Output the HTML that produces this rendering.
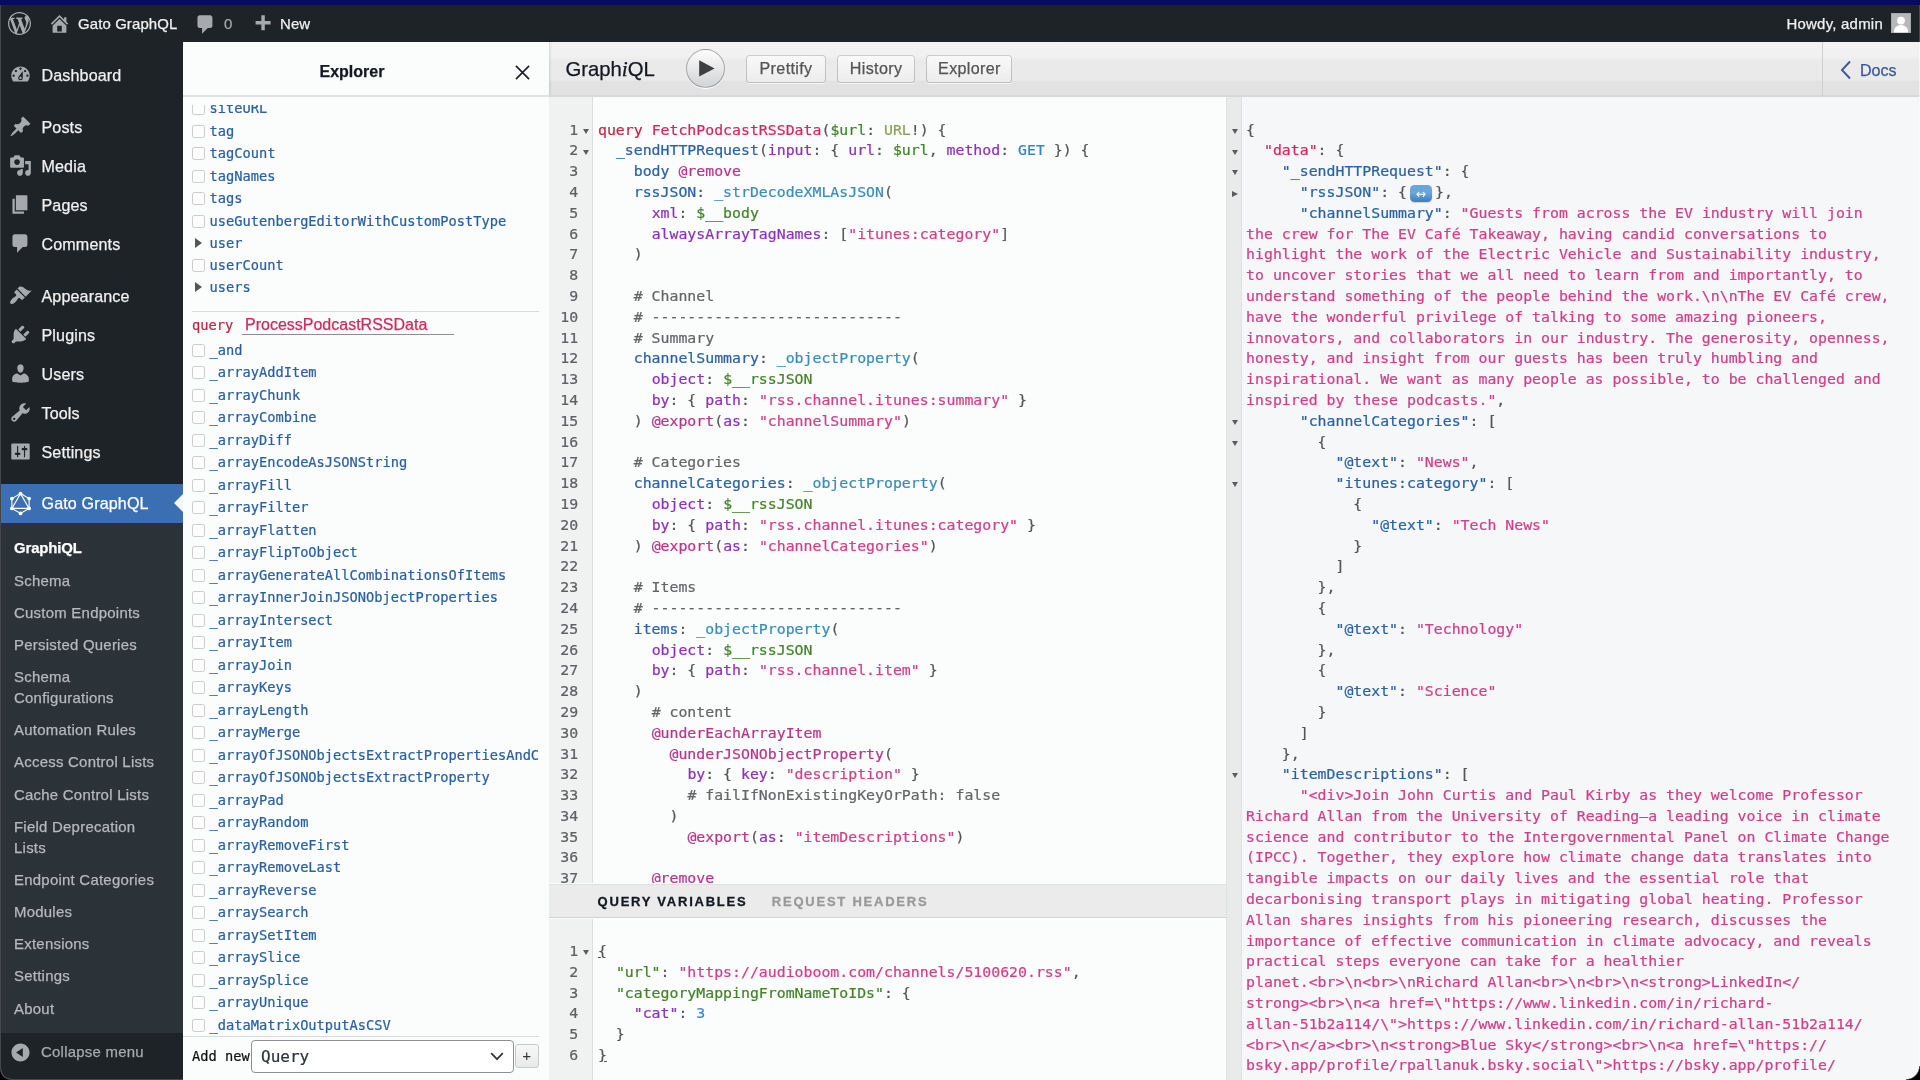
<!DOCTYPE html>
<html lang="en"><head><meta charset="utf-8"><title>GraphiQL &lsaquo; Gato GraphQL &#8212; WordPress</title>
<style>
*{box-sizing:border-box;margin:0;padding:0}
html,body{width:1920px;height:1080px;overflow:hidden;background:#fff}
body{position:relative;font-family:"Liberation Sans",Arial,sans-serif;-webkit-font-smoothing:antialiased}
.ic{position:absolute;display:block}
b{font-weight:normal}
i{font-style:normal}

/* ---------- window chrome ---------- */
#strip{position:absolute;left:0;top:0;width:1920px;height:5px;background:#060c5a;z-index:9}
#bar,#side,#ex,#gq{will-change:transform}
#ledge{position:absolute;left:0;top:5px;width:1px;height:1075px;background:#43474c;z-index:9}
.corner{position:absolute;bottom:0;overflow:hidden;z-index:9}
#cbl{left:0;width:11px;height:11px;background:radial-gradient(circle at 11px 0,transparent 9.2px,#4a4e53 9.8px,#4a4e53 10.4px,#000 11.2px)}
#cbr{right:0;width:14px;height:14px;background:radial-gradient(circle at 0 0,transparent 12px,rgba(255,255,255,.9) 12.6px,#000 14px)}
#redge{position:absolute;left:1919px;top:5px;width:1px;height:37px;background:#474b50;z-index:9}
#redge2{position:absolute;left:1918.5px;top:42px;width:1.5px;height:1024px;background:rgba(255,255,255,.55);z-index:9}
#bedge{position:absolute;left:11px;top:1079px;width:172px;height:1px;background:#44484d;z-index:9}

/* ---------- admin bar ---------- */
#bar{position:absolute;left:0;top:5px;width:1920px;height:37px;background:#1d2327}
.bt{position:absolute;top:-0.4px;line-height:37px;font-size:14.95px;color:#f0f0f1;white-space:nowrap;letter-spacing:.12px}

/* ---------- sidebar ---------- */
#side{position:absolute;left:0;top:0;width:183px;height:1080px;background:#1d2327;z-index:0}
#bar{z-index:2}
#subbg{position:absolute;left:0;top:523px;width:183px;height:510px;background:#2c3338}
#active{position:absolute;left:0;top:484px;width:183px;height:39px;background:#3a6fb3}
#arrow{position:absolute;left:174px;top:494px;width:0;height:0;border-top:9.5px solid transparent;border-bottom:9.5px solid transparent;border-right:9px solid #f4f5f5}
.mi{position:absolute;left:41.5px;font-size:16.1px;line-height:20px;color:#f0f0f1;white-space:nowrap;letter-spacing:.13px}
.si{position:absolute;left:14px;font-size:14.95px;line-height:21px;color:#b5b9be;white-space:nowrap;letter-spacing:.25px}
.si.cur{color:#fff;font-weight:bold;letter-spacing:-.15px}
#collapse{position:absolute;left:0;top:1033px;width:183px;height:47px;background:#1d2327}

/* ---------- explorer ---------- */
#ex{position:absolute;left:183px;top:42px;width:366px;height:1038px;background:#fbfcfc;overflow:hidden}
#extitle{position:absolute;left:0;top:0;width:366px;height:55px;background:#fbfcfc;border-bottom:2px solid #dfe0e0}
#extitle span{position:absolute;left:136.5px;top:19.8px;font-size:16px;font-weight:bold;line-height:20px;color:#141823}
#exx{position:absolute;left:332px;top:22.8px;width:15px;height:15px}
#exlist{position:absolute;left:0;top:63px;width:366px;height:931px;overflow:hidden}
.er{position:absolute;left:9.3px;height:22.5px;line-height:22.5px;font-family:"DejaVu Sans Mono","Liberation Mono",monospace;font-size:13.7px;color:#2a60a2;white-space:nowrap;width:346.5px;overflow:hidden}
.er span{vertical-align:top}
.cb{display:inline-block;width:13.2px;height:13.2px;border:1.5px solid #cdcdcd;border-radius:2.2px;background:#fdfdfd;margin:4.75px 4px 0 0;vertical-align:top}
.ar{display:inline-block;width:0;height:0;border-top:5px solid transparent;border-bottom:5px solid transparent;border-left:7px solid #555;margin:6.2px 7.9px 0 2.3px;vertical-align:top}
#exsep{position:absolute;left:9px;top:206px;width:347px;height:1px;background:#d9dada}
#exq{position:absolute;left:9px;top:209.4px;height:22px;line-height:22px;white-space:nowrap}
#exq .kw{margin-top:-0.5px;font-family:"DejaVu Sans Mono","Liberation Mono",monospace;font-size:13.7px;color:#c22545;position:absolute;left:0;top:0}
#exq .qn{position:absolute;left:50px;top:0;width:212px;height:20.4px;border-bottom:1.3px solid #8e8e8e;font-size:16px;color:#cb2d5c;padding-left:3px;line-height:21.2px}
#exfoot{position:absolute;left:0;top:994px;width:356px;height:44px;background:#fbfcfc;border-top:1px solid #d9dada}
#exfoot .an{position:absolute;left:9px;top:8px;line-height:22px;font-family:"DejaVu Sans Mono","Liberation Mono",monospace;font-size:13.7px;color:#111}
#exfoot .sel{position:absolute;left:68px;top:3px;width:263px;height:33px;border:1px solid #8c8f94;border-radius:4px;background:#fff;font-family:"DejaVu Sans Mono","Liberation Mono",monospace;font-size:16px;line-height:31px;padding-left:9px;color:#2c3338}
#exfoot .sel svg{position:absolute;right:9px;top:11px}
#exfoot .pl{position:absolute;left:331.7px;top:6.8px;width:24.2px;height:24.5px;border:1px solid #c9c9c9;border-radius:3px;background:linear-gradient(#f7f7f7,#e9e9e9);font-family:"DejaVu Sans Mono","Liberation Mono",monospace;font-size:14px;line-height:23px;text-align:center;color:#333}

/* ---------- graphiql ---------- */
#gq{position:absolute;left:549px;top:42px;width:1371px;height:1038px;background:#fbfcfc;overflow:hidden}
#tb{position:absolute;left:0;top:0;width:1371px;height:55px;background:linear-gradient(#f2f2f2 0%,#f1f1f1 27%,#eaeaea 36%,#eaeaea 72%,#e2e2e2 74%,#e2e2e2 100%);border-bottom:2px solid #d8d8d8;box-shadow:inset 3px 0 3px -2px rgba(0,0,0,.12)}
#title{position:absolute;left:16.4px;top:13.6px;font-size:20.3px;line-height:26px;color:#141823;white-space:nowrap}
#title em{font-family:"Liberation Serif",Georgia,serif;font-style:italic;font-size:21.5px}
#run{position:absolute;left:136.5px;top:7.3px;width:39.2px;height:39.2px;border-radius:50%;background:linear-gradient(#fdfdfd,#d2d3d6);border:1px solid rgba(0,0,0,.28);box-shadow:0 1px 0 #fff}
#run svg{position:absolute;left:-1px;top:-1px}
.btn{position:absolute;top:13.2px;height:27.8px;background:linear-gradient(#f9f9f9,#ececec);border-radius:3.5px;box-shadow:inset 0 0 0 1px rgba(0,0,0,.20),0 1px 0 rgba(255,255,255,.7),inset 0 1px #fff;color:#555;font-size:16.1px;line-height:26.5px;text-align:center;white-space:nowrap;letter-spacing:.35px}
#docs{position:absolute;left:1273px;top:0;width:98px;height:54px;border-left:1px solid #d0d0d0}
#docs svg{position:absolute;left:16.8px;top:18px}
#docs span{position:absolute;left:37px;top:17.5px;font-size:16.1px;line-height:20px;color:#3b5998}

.gut{position:absolute;left:0;top:0;bottom:0;background:#f0f1f1;border-right:1px solid #dddede}
.gpad{position:absolute;left:0;right:0;top:22.6px}
.gn{height:20.8px;line-height:20.8px;font-family:"DejaVu Sans Mono","Liberation Mono",monospace;font-size:14.85px;color:#5e6164;text-align:right;padding-right:13.8px;position:relative;white-space:nowrap}
.fd{position:absolute;right:3.2px;top:9.2px;width:0;height:0;border-left:3.1px solid transparent;border-right:3.1px solid transparent;border-top:5.9px solid #5a5c5f}
.fr{position:absolute;right:4.5px;top:8.6px;width:0;height:0;border-top:3.3px solid transparent;border-bottom:3.3px solid transparent;border-left:6.2px solid #5a5c5f}
.code{position:absolute;top:22.6px;font-family:"DejaVu Sans Mono","Liberation Mono",monospace;font-size:14.85px;color:#555}
.ln{height:20.8px;line-height:20.8px;white-space:pre}

#qed{position:absolute;left:0;top:55px;width:677px;height:786px;overflow:hidden;box-shadow:inset 3px 0 3px -2px rgba(0,0,0,.10)}
#qed .gut,#ved .gut{width:44px}
#qed .code,#ved .code{left:49px}
#vtitle{position:absolute;left:0;top:841.5px;width:677px;height:34.5px;background:#ebebeb;border-top:1px solid #e0e0e0;border-bottom:1px solid #d2d2d2}
#vtitle span{position:absolute;top:9.3px;font-size:13px;font-weight:bold;letter-spacing:1.77px;line-height:16px;white-space:nowrap;-webkit-text-stroke:0.3px currentColor}
#vtitle .on{left:48.6px;color:#141823}
#vtitle .off{left:222.8px;color:#999}
#ved{position:absolute;left:0;top:876.5px;width:677px;height:162px;overflow:hidden}
#res{position:absolute;left:677px;top:55px;width:694px;height:983px;background:#f6f7f8;overflow:hidden;border-left:1px solid #e0e0e0}
#res .gut{width:15px;background:#e9eaea;border-right:1px solid #e1e2e2}
#res .code{left:19.1px}
#res .gn{padding:0}
#res .fd{right:3.1px}
#res .fr{right:3.2px}

/* tokens */
.k{color:#c42848}.d{color:#d1295e}.v{color:#44832a}.a{color:#8aa356}.pr{color:#2a62a5}.at{color:#8c33ba}
.s{color:#d0408a}.c{color:#656568}.m{color:#b7368a}.q{color:#3a8db9}.s2{color:#3584c4}.n{color:#3f86d6}
.mb{text-decoration:underline}
.fm{display:inline-block;vertical-align:top;margin:3px 2.7px 0 2.6px;width:22.75px;height:17.5px;border-radius:4.5px;background:linear-gradient(#68a7da,#6aa6d8 45%,#3f7dc5);box-shadow:0 1px 1px rgba(0,0,0,.15);color:#fff;font-family:"DejaVu Sans","Liberation Sans",sans-serif;font-size:12.5px;line-height:17.5px;text-align:center;overflow:hidden;-webkit-text-stroke:0}

.er,.code,.gn,#exq .kw,#exfoot .an,#exfoot .sel{-webkit-text-stroke:0.22px currentColor}
.mi,.si,.bt,#extitle span,#exq .qn,.btn,#docs span,#title{-webkit-text-stroke:0.25px currentColor}

</style></head>
<body>
<div id="strip"></div>
<div id="bar">
<svg class="ic" style="left:8px;top:7px" width="23" height="23" viewBox="0 0 20 20"><path fill="#a7aaad" d="M20 10c0-5.51-4.49-10-10-10C4.48 0 0 4.49 0 10c0 5.52 4.48 10 10 10 5.51 0 10-4.48 10-10zM7.78 15.37L4.37 6.22c.55-.02 1.17-.08 1.17-.08.5-.06.44-1.13-.06-1.11 0 0-1.45.11-2.37.11-.18 0-.37 0-.58-.01C4.12 2.69 6.87 1.11 10 1.11c2.33 0 4.45.87 6.05 2.34-.68-.11-1.65.39-1.65 1.58 0 .74.45 1.36.9 2.1.35.61.55 1.36.55 2.46 0 1.49-1.4 5-1.4 5l-3.03-8.37c.54-.02.82-.17.82-.17.5-.05.44-1.25-.06-1.22 0 0-1.44.12-2.38.12-.87 0-2.33-.12-2.33-.12-.5-.03-.56 1.2-.06 1.22l.92.08 1.26 3.41zM17.41 10c.24-.64.74-1.87.43-4.25.7 1.29 1.05 2.71 1.05 4.25 0 3.29-1.73 6.24-4.4 7.78.97-2.59 1.94-5.2 2.92-7.78zM6.1 18.09C3.12 16.65 1.11 13.53 1.11 10c0-1.3.23-2.48.72-3.59C3.25 10.3 4.67 14.2 6.1 18.09zm4.03-6.63l2.58 6.98c-.86.29-1.76.45-2.71.45-.79 0-1.57-.11-2.29-.33.81-2.38 1.62-4.74 2.42-7.1z"/></svg>
<svg class="ic" style="left:48px;top:6.5px" width="23" height="23" viewBox="0 0 20 20"><path fill="#a7aaad" d="M16 8.5l1.53 1.53-1.06 1.06L10 4.62l-6.47 6.47-1.06-1.06L10 2.5l4 4v-2h2v4zm-6-2.46l6 5.99V18H4v-5.97zM12 17v-5H8v5h4z"/></svg>
<div class="bt" style="left:78px">Gato GraphQL</div>
<svg class="ic" style="left:194px;top:8px" width="23" height="23" viewBox="0 0 20 20"><path fill="#a7aaad" d="M5 2h9c1.1 0 2 .9 2 2v7c0 1.1-.9 2-2 2h-2l-5 5v-5H5c-1.1 0-2-.9-2-2V4c0-1.1.9-2 2-2z"/></svg>
<div class="bt" style="left:224px;color:#a7aaad">0</div>
<svg class="ic" style="left:250.5px;top:8.3px" width="23" height="23" viewBox="0 0 20 20"><path fill="#a7aaad" d="M17 7v3h-5v5H9v-5H4V7h5V2h3v5h5z"/></svg>
<div class="bt" style="left:280px">New</div>
<div class="bt" style="right:37px;letter-spacing:.25px">Howdy, admin</div>
<svg class="ic" style="left:1891px;top:7.7px" width="20" height="20" viewBox="0 0 21 21">
<rect x="0.5" y="0.5" width="20" height="20" fill="#b8b8b8" stroke="#a9abae"/>
<circle cx="10.5" cy="8" r="4.1" fill="#fff"/><path d="M3 20.5c0-5 3-8 7.5-8s7.5 3 7.5 8z" fill="#fff"/></svg>
</div>
<div id="side">
<div id="subbg"></div>
<div id="active"></div><div id="arrow"></div>
<svg class="ic" style="left:9px;top:63px" width="23" height="23" viewBox="0 0 20 20"><path fill="#a7aaad" d="M3.76 16h12.48c1.1-1.37 1.76-3.11 1.76-5 0-4.42-3.58-8-8-8s-8 3.58-8 8c0 1.89.66 3.63 1.76 5zM10 4c.55 0 1 .45 1 1s-.45 1-1 1-1-.45-1-1 .45-1 1-1zM6 6c.55 0 1 .45 1 1s-.45 1-1 1-1-.45-1-1 .45-1 1-1zm8 0c.55 0 1 .45 1 1s-.45 1-1 1-1-.45-1-1 .45-1 1-1zm-5.37 5.55L12 7v6c0 1.1-.9 2-2 2s-2-.9-2-2c0-.57.24-1.08.63-1.45zM4 10c.55 0 1 .45 1 1s-.45 1-1 1-1-.45-1-1 .45-1 1-1zm12 0c.55 0 1 .45 1 1s-.45 1-1 1-1-.45-1-1 .45-1 1-1zm-5 3c0-.55-.45-1-1-1s-1 .45-1 1 .45 1 1 1 1-.45 1-1z"/></svg>
<div class="mi" style="top:65px">Dashboard</div>
<svg class="ic" style="left:9px;top:115px" width="23" height="23" viewBox="0 0 20 20"><path fill="#a7aaad" d="M10.44 3.02l1.82-1.82 6.36 6.35-1.83 1.82c-1.05-.68-2.48-.57-3.41.36l-.75.75c-.92.93-1.04 2.35-.35 3.41l-1.83 1.82-2.41-2.41-2.8 2.79c-.42.42-3.38 2.71-3.8 2.29s1.86-3.39 2.28-3.81l2.79-2.79L4.1 9.36l1.83-1.82c1.05.69 2.48.57 3.4-.36l.75-.75c.93-.92 1.05-2.35.36-3.41z"/></svg>
<div class="mi" style="top:117px">Posts</div>
<svg class="ic" style="left:9px;top:154px" width="23" height="23" viewBox="0 0 20 20"><path fill="#a7aaad" d="M13 11V4c0-.55-.45-1-1-1h-1.67L9 1H5L3.67 3H2c-.55 0-1 .45-1 1v7c0 .55.45 1 1 1h10c.55 0 1-.45 1-1zM7 4.5c1.38 0 2.5 1.12 2.5 2.5S8.38 9.5 7 9.5 4.5 8.38 4.5 7 5.62 4.5 7 4.5zM14 6h5v10.5c0 1.38-1.12 2.5-2.5 2.5S14 17.88 14 16.5s1.12-2.5 2.5-2.5c.17 0 .34.02.5.05V9h-3V6zm-4 8.05V13h2v3.5c0 1.38-1.12 2.5-2.5 2.5S7 17.88 7 16.5 8.12 14 9.5 14c.17 0 .34.02.5.05z"/></svg>
<div class="mi" style="top:156px">Media</div>
<svg class="ic" style="left:9px;top:193px" width="23" height="23" viewBox="0 0 20 20"><path fill="#a7aaad" d="M6 15V2h10v13H6zm-1 1h8v2H3V5h2v11z"/></svg>
<div class="mi" style="top:195px">Pages</div>
<svg class="ic" style="left:9px;top:232px" width="23" height="23" viewBox="0 0 20 20"><path fill="#a7aaad" d="M5 2h9c1.1 0 2 .9 2 2v7c0 1.1-.9 2-2 2h-2l-5 5v-5H5c-1.1 0-2-.9-2-2V4c0-1.1.9-2 2-2z"/></svg>
<div class="mi" style="top:234px">Comments</div>
<svg class="ic" style="left:9px;top:284px" width="23" height="23" viewBox="0 0 20 20"><path fill="#a7aaad" d="M14.48 11.06L7.41 3.99l1.5-1.5c.5-.56 2.3-.47 3.51.32 1.21.8 1.43 1.28 2.91 2.1 1.18.64 2.45 1.26 4.45.85zm-.71.71L6.7 4.7 4.93 6.47c-.39.39-.39 1.02 0 1.41l1.06 1.06c.39.39.39 1.03 0 1.42-.6.6-1.43 1.11-2.21 1.69-.35.26-.7.53-1.01.84C1.43 14.23.4 16.08 1.4 17.07c.99 1 2.84-.03 4.18-1.36.31-.31.58-.66.85-1.02.57-.78 1.08-1.61 1.69-2.21.39-.39 1.02-.39 1.41 0l1.06 1.06c.39.39 1.02.39 1.41 0z"/></svg>
<div class="mi" style="top:286px">Appearance</div>
<svg class="ic" style="left:9px;top:323px" width="23" height="23" viewBox="0 0 20 20"><path fill="#a7aaad" d="M13.11 4.36L9.87 7.6 8 5.73l3.24-3.24c.35-.34 1.05-.2 1.56.32.52.51.66 1.21.31 1.55zm-8 1.77l.91-1.12 9.01 9.01-1.19.84c-.71.71-2.63 1.16-3.82 1.16H6.14L4.9 17.26c-.59.59-1.54.59-2.12 0-.59-.58-.59-1.53 0-2.12l1.24-1.24v-3.88c0-1.13.4-3.19 1.09-3.89zm7.26 3.97l3.24-3.24c.34-.35 1.04-.21 1.55.31.52.51.66 1.21.31 1.55l-3.24 3.25z"/></svg>
<div class="mi" style="top:325px">Plugins</div>
<svg class="ic" style="left:9px;top:362px" width="23" height="23" viewBox="0 0 20 20"><path fill="#a7aaad" d="M10 9.25c-2.27 0-2.73-3.44-2.73-3.44C7 4.02 7.82 2 9.97 2c2.16 0 2.98 2.02 2.71 3.81 0 0-.41 3.44-2.68 3.44zm0 2.57L12.72 10c2.39 0 4.52 2.33 4.52 4.53v2.49s-3.65 1.13-7.24 1.13c-3.65 0-7.24-1.13-7.24-1.13v-2.49c0-2.25 1.94-4.48 4.47-4.48z"/></svg>
<div class="mi" style="top:364px">Users</div>
<svg class="ic" style="left:9px;top:401px" width="23" height="23" viewBox="0 0 20 20"><path fill="#a7aaad" d="M16.68 9.77c-1.34 1.34-3.3 1.67-4.95.99l-5.41 6.52c-.99.99-2.59.99-3.58 0s-.99-2.59 0-3.57l6.52-5.42c-.68-1.65-.35-3.61.99-4.95 1.28-1.28 3.12-1.62 4.72-1.06l-2.89 2.89 2.82 2.82 2.86-2.87c.53 1.58.18 3.39-1.08 4.65zM3.81 16.21c.4.39 1.04.39 1.43 0 .4-.4.4-1.04 0-1.43-.39-.4-1.03-.4-1.43 0-.39.39-.39 1.03 0 1.43z"/></svg>
<div class="mi" style="top:403px">Tools</div>
<svg class="ic" style="left:9px;top:440px" width="23" height="23" viewBox="0 0 20 20"><path fill="#a7aaad" d="M18 16V4c0-.55-.45-1-1-1H3c-.55 0-1 .45-1 1v12c0 .55.45 1 1 1h14c.55 0 1-.45 1-1zM8 11h1c.55 0 1 .45 1 1s-.45 1-1 1H8v1.5c0 .28-.22.5-.5.5s-.5-.22-.5-.5V13H6c-.55 0-1-.45-1-1s.45-1 1-1h1V5.5c0-.28.22-.5.5-.5s.5.22.5.5V11zm5-2h-1c-.55 0-1-.45-1-1s.45-1 1-1h1V5.5c0-.28.22-.5.5-.5s.5.22.5.5V7h1c.55 0 1 .45 1 1s-.45 1-1 1h-1v5.5c0 .28-.22.5-.5.5s-.5-.22-.5-.5V9z"/></svg>
<div class="mi" style="top:442px">Settings</div>
<svg class="ic" style="left:9px;top:491px" width="23" height="25" viewBox="0 0 23 25">
<g fill="none" stroke="#fff" stroke-width="1.1">
<polygon points="11.5,2.6 20.1,7.6 20.1,17.4 11.5,22.4 2.9,17.4 2.9,7.6"/>
<polygon points="11.5,2.6 20.1,17.4 2.9,17.4"/>
</g>
<g fill="#fff">
<circle cx="11.5" cy="2.6" r="1.9"/><circle cx="20.1" cy="7.6" r="1.9"/><circle cx="20.1" cy="17.4" r="1.9"/>
<circle cx="11.5" cy="22.4" r="1.9"/><circle cx="2.9" cy="17.4" r="1.9"/><circle cx="2.9" cy="7.6" r="1.9"/>
</g></svg>
<div class="mi" style="top:493px;color:#fff">Gato GraphQL</div>
<div class="si cur" style="top:536.5px">GraphiQL</div>
<div class="si" style="top:569.5px">Schema</div>
<div class="si" style="top:601.5px">Custom Endpoints</div>
<div class="si" style="top:633.5px">Persisted Queries</div>
<div class="si" style="top:665.5px">Schema<br>Configurations</div>
<div class="si" style="top:718.5px">Automation Rules</div>
<div class="si" style="top:750.5px">Access Control Lists</div>
<div class="si" style="top:783.5px">Cache Control Lists</div>
<div class="si" style="top:815.5px">Field Deprecation<br>Lists</div>
<div class="si" style="top:868.5px">Endpoint Categories</div>
<div class="si" style="top:900.5px">Modules</div>
<div class="si" style="top:932.5px">Extensions</div>
<div class="si" style="top:964.5px">Settings</div>
<div class="si" style="top:997.5px">About</div>
<div id="collapse"></div>
<svg class="ic" style="left:9px;top:1041px" width="23" height="23" viewBox="0 0 20 20"><path fill="#a7aaad" d="M10 2.16c4.33 0 7.84 3.51 7.84 7.84s-3.51 7.84-7.84 7.84S2.16 14.33 2.16 10 5.67 2.16 10 2.16zm2 11.72V6.12L6.18 9.97z"/></svg>
<div class="si" style="top:1041px;left:41px;color:#a7aaad">Collapse menu</div>
</div>
<div id="ex">
<div id="exlist">
<div class="er" style="top:-7.75px"><i class="cb"></i><span>siteURL</span></div>
<div class="er" style="top:14.75px"><i class="cb"></i><span>tag</span></div>
<div class="er" style="top:37.25px"><i class="cb"></i><span>tagCount</span></div>
<div class="er" style="top:59.75px"><i class="cb"></i><span>tagNames</span></div>
<div class="er" style="top:82.25px"><i class="cb"></i><span>tags</span></div>
<div class="er" style="top:104.75px"><i class="cb"></i><span>useGutenbergEditorWithCustomPostType</span></div>
<div class="er" style="top:126.75px"><i class="ar"></i><span>user</span></div>
<div class="er" style="top:148.75px"><i class="cb"></i><span>userCount</span></div>
<div class="er" style="top:170.75px"><i class="ar"></i><span>users</span></div>
<div id="exsep"></div>
<div id="exq"><span class="kw">query</span><span class="qn">ProcessPodcastRSSData</span></div>
<div class="er" style="top:233.75px"><i class="cb"></i><span>_and</span></div>
<div class="er" style="top:256.25px"><i class="cb"></i><span>_arrayAddItem</span></div>
<div class="er" style="top:278.75px"><i class="cb"></i><span>_arrayChunk</span></div>
<div class="er" style="top:301.25px"><i class="cb"></i><span>_arrayCombine</span></div>
<div class="er" style="top:323.75px"><i class="cb"></i><span>_arrayDiff</span></div>
<div class="er" style="top:346.25px"><i class="cb"></i><span>_arrayEncodeAsJSONString</span></div>
<div class="er" style="top:368.75px"><i class="cb"></i><span>_arrayFill</span></div>
<div class="er" style="top:391.25px"><i class="cb"></i><span>_arrayFilter</span></div>
<div class="er" style="top:413.75px"><i class="cb"></i><span>_arrayFlatten</span></div>
<div class="er" style="top:436.25px"><i class="cb"></i><span>_arrayFlipToObject</span></div>
<div class="er" style="top:458.75px"><i class="cb"></i><span>_arrayGenerateAllCombinationsOfItems</span></div>
<div class="er" style="top:481.25px"><i class="cb"></i><span>_arrayInnerJoinJSONObjectProperties</span></div>
<div class="er" style="top:503.75px"><i class="cb"></i><span>_arrayIntersect</span></div>
<div class="er" style="top:526.25px"><i class="cb"></i><span>_arrayItem</span></div>
<div class="er" style="top:548.75px"><i class="cb"></i><span>_arrayJoin</span></div>
<div class="er" style="top:571.25px"><i class="cb"></i><span>_arrayKeys</span></div>
<div class="er" style="top:593.75px"><i class="cb"></i><span>_arrayLength</span></div>
<div class="er" style="top:616.25px"><i class="cb"></i><span>_arrayMerge</span></div>
<div class="er" style="top:638.75px"><i class="cb"></i><span>_arrayOfJSONObjectsExtractPropertiesAndConvertToObject</span></div>
<div class="er" style="top:661.25px"><i class="cb"></i><span>_arrayOfJSONObjectsExtractProperty</span></div>
<div class="er" style="top:683.75px"><i class="cb"></i><span>_arrayPad</span></div>
<div class="er" style="top:706.25px"><i class="cb"></i><span>_arrayRandom</span></div>
<div class="er" style="top:728.75px"><i class="cb"></i><span>_arrayRemoveFirst</span></div>
<div class="er" style="top:751.25px"><i class="cb"></i><span>_arrayRemoveLast</span></div>
<div class="er" style="top:773.75px"><i class="cb"></i><span>_arrayReverse</span></div>
<div class="er" style="top:796.25px"><i class="cb"></i><span>_arraySearch</span></div>
<div class="er" style="top:818.75px"><i class="cb"></i><span>_arraySetItem</span></div>
<div class="er" style="top:841.25px"><i class="cb"></i><span>_arraySlice</span></div>
<div class="er" style="top:863.75px"><i class="cb"></i><span>_arraySplice</span></div>
<div class="er" style="top:886.25px"><i class="cb"></i><span>_arrayUnique</span></div>
<div class="er" style="top:908.75px"><i class="cb"></i><span>_dataMatrixOutputAsCSV</span></div>
</div>
<div id="extitle"><span>Explorer</span><svg id="exx" width="16" height="16" viewBox="0 0 16 16"><path d="M1 1L15 15M15 1L1 15" stroke="#1a1d24" stroke-width="1.7" fill="none"/></svg></div>
<div id="exfoot"><span class="an">Add new</span><span class="sel">Query<svg width="14" height="9" viewBox="0 0 14 9"><path d="M1.2 1.2L7 7.2L12.8 1.2" stroke="#333" stroke-width="1.7" fill="none"/></svg></span><span class="pl">+</span></div>
</div>
<div id="gq">
<div id="qed"><div class="gut"><div class="gpad"><div class="gn">1<i class="fd"></i></div>
<div class="gn">2<i class="fd"></i></div>
<div class="gn">3</div>
<div class="gn">4</div>
<div class="gn">5</div>
<div class="gn">6</div>
<div class="gn">7</div>
<div class="gn">8</div>
<div class="gn">9</div>
<div class="gn">10</div>
<div class="gn">11</div>
<div class="gn">12</div>
<div class="gn">13</div>
<div class="gn">14</div>
<div class="gn">15</div>
<div class="gn">16</div>
<div class="gn">17</div>
<div class="gn">18</div>
<div class="gn">19</div>
<div class="gn">20</div>
<div class="gn">21</div>
<div class="gn">22</div>
<div class="gn">23</div>
<div class="gn">24</div>
<div class="gn">25</div>
<div class="gn">26</div>
<div class="gn">27</div>
<div class="gn">28</div>
<div class="gn">29</div>
<div class="gn">30</div>
<div class="gn">31</div>
<div class="gn">32</div>
<div class="gn">33</div>
<div class="gn">34</div>
<div class="gn">35</div>
<div class="gn">36</div>
<div class="gn">37</div>
<div class="gn">38</div></div></div><div class="code"><div class="ln"><b class="k">query</b> <b class="d">FetchPodcastRSSData</b>(<b class="v">$url</b>: <b class="a">URL</b>!) {</div>
<div class="ln">  <b class="pr">_sendHTTPRequest</b>(<b class="at">input</b>: { <b class="at">url</b>: <b class="v">$url</b>, <b class="at">method</b>: <b class="s2">GET</b> }) {</div>
<div class="ln">    <b class="pr">body</b> <b class="m">@remove</b></div>
<div class="ln">    <b class="pr">rssJSON</b>: <b class="q">_strDecodeXMLAsJSON</b>(</div>
<div class="ln">      <b class="at">xml</b>: <b class="v">$__body</b></div>
<div class="ln">      <b class="at">alwaysArrayTagNames</b>: [<b class="s">"itunes:category"</b>]</div>
<div class="ln">    )</div>
<div class="ln">&nbsp;</div>
<div class="ln">    <b class="c"># Channel</b></div>
<div class="ln">    <b class="c"># ----------------------------</b></div>
<div class="ln">    <b class="c"># Summary</b></div>
<div class="ln">    <b class="pr">channelSummary</b>: <b class="q">_objectProperty</b>(</div>
<div class="ln">      <b class="at">object</b>: <b class="v">$__rssJSON</b></div>
<div class="ln">      <b class="at">by</b>: { <b class="at">path</b>: <b class="s">"rss.channel.itunes:summary"</b> }</div>
<div class="ln">    ) <b class="m">@export</b>(<b class="at">as</b>: <b class="s">"channelSummary"</b>)</div>
<div class="ln">&nbsp;</div>
<div class="ln">    <b class="c"># Categories</b></div>
<div class="ln">    <b class="pr">channelCategories</b>: <b class="q">_objectProperty</b>(</div>
<div class="ln">      <b class="at">object</b>: <b class="v">$__rssJSON</b></div>
<div class="ln">      <b class="at">by</b>: { <b class="at">path</b>: <b class="s">"rss.channel.itunes:category"</b> }</div>
<div class="ln">    ) <b class="m">@export</b>(<b class="at">as</b>: <b class="s">"channelCategories"</b>)</div>
<div class="ln">&nbsp;</div>
<div class="ln">    <b class="c"># Items</b></div>
<div class="ln">    <b class="c"># ----------------------------</b></div>
<div class="ln">    <b class="pr">items</b>: <b class="q">_objectProperty</b>(</div>
<div class="ln">      <b class="at">object</b>: <b class="v">$__rssJSON</b></div>
<div class="ln">      <b class="at">by</b>: { <b class="at">path</b>: <b class="s">"rss.channel.item"</b> }</div>
<div class="ln">    )</div>
<div class="ln">      <b class="c"># content</b></div>
<div class="ln">      <b class="m">@underEachArrayItem</b></div>
<div class="ln">        <b class="m">@underJSONObjectProperty</b>(</div>
<div class="ln">          <b class="at">by</b>: { <b class="at">key</b>: <b class="s">"description"</b> }</div>
<div class="ln">          <b class="c"># failIfNonExistingKeyOrPath: false</b></div>
<div class="ln">        )</div>
<div class="ln">          <b class="m">@export</b>(<b class="at">as</b>: <b class="s">"itemDescriptions"</b>)</div>
<div class="ln">&nbsp;</div>
<div class="ln">      <b class="m">@remove</b></div>
<div class="ln">      <b class="c"># more</b></div></div></div>
<div id="vtitle"><span class="on">QUERY VARIABLES</span><span class="off">REQUEST HEADERS</span></div>
<div id="ved"><div class="gut"><div class="gpad"><div class="gn">1<i class="fd"></i></div>
<div class="gn">2</div>
<div class="gn">3</div>
<div class="gn">4</div>
<div class="gn">5</div>
<div class="gn">6</div></div></div><div class="code"><div class="ln"><b class="mb">{</b></div>
<div class="ln">  <b class="v">"url"</b>: <b class="s">"https://audioboom.com/channels/5100620.rss"</b>,</div>
<div class="ln">  <b class="v">"categoryMappingFromNameToIDs"</b>: {</div>
<div class="ln">    <b class="at">"cat"</b>: <b class="n">3</b></div>
<div class="ln">  }</div>
<div class="ln"><b class="mb">}</b></div></div></div>
<div id="res"><div class="gut"><div class="gpad"><div class="gn"><i class="fd"></i></div>
<div class="gn"><i class="fd"></i></div>
<div class="gn"><i class="fd"></i></div>
<div class="gn"><i class="fr"></i></div>
<div class="gn"></div>
<div class="gn"></div>
<div class="gn"></div>
<div class="gn"></div>
<div class="gn"></div>
<div class="gn"></div>
<div class="gn"></div>
<div class="gn"></div>
<div class="gn"></div>
<div class="gn"></div>
<div class="gn"><i class="fd"></i></div>
<div class="gn"><i class="fd"></i></div>
<div class="gn"></div>
<div class="gn"><i class="fd"></i></div>
<div class="gn"></div>
<div class="gn"></div>
<div class="gn"></div>
<div class="gn"></div>
<div class="gn"></div>
<div class="gn"></div>
<div class="gn"></div>
<div class="gn"></div>
<div class="gn"></div>
<div class="gn"></div>
<div class="gn"></div>
<div class="gn"></div>
<div class="gn"></div>
<div class="gn"><i class="fd"></i></div>
<div class="gn"></div>
<div class="gn"></div>
<div class="gn"></div>
<div class="gn"></div>
<div class="gn"></div>
<div class="gn"></div>
<div class="gn"></div>
<div class="gn"></div>
<div class="gn"></div>
<div class="gn"></div>
<div class="gn"></div>
<div class="gn"></div>
<div class="gn"></div>
<div class="gn"></div>
<div class="gn"></div></div></div><div class="code"><div class="ln">{</div>
<div class="ln">  <b class="d">"data"</b>: {</div>
<div class="ln">    <b class="pr">"_sendHTTPRequest"</b>: {</div>
<div class="ln">      <b class="pr">"rssJSON"</b>: {<i class="fm">↔</i>},</div>
<div class="ln">      <b class="pr">"channelSummary"</b>: <b class="s">"Guests from across the EV industry will join</b></div>
<div class="ln"><b class="s">the crew for The EV Café Takeaway, having candid conversations to</b></div>
<div class="ln"><b class="s">highlight the work of the Electric Vehicle and Sustainability industry,</b></div>
<div class="ln"><b class="s">to uncover stories that we all need to learn from and importantly, to</b></div>
<div class="ln"><b class="s">understand something of the people behind the work.\n\nThe EV Café crew,</b></div>
<div class="ln"><b class="s">have the wonderful privilege of talking to some amazing pioneers,</b></div>
<div class="ln"><b class="s">innovators, and collaborators in our industry. The generosity, openness,</b></div>
<div class="ln"><b class="s">honesty, and insight from our guests has been truly humbling and</b></div>
<div class="ln"><b class="s">inspirational. We want as many people as possible, to be challenged and</b></div>
<div class="ln"><b class="s">inspired by these podcasts."</b>,</div>
<div class="ln">      <b class="pr">"channelCategories"</b>: [</div>
<div class="ln">        {</div>
<div class="ln">          <b class="pr">"@text"</b>: <b class="s">"News"</b>,</div>
<div class="ln">          <b class="pr">"itunes:category"</b>: [</div>
<div class="ln">            {</div>
<div class="ln">              <b class="pr">"@text"</b>: <b class="s">"Tech News"</b></div>
<div class="ln">            }</div>
<div class="ln">          ]</div>
<div class="ln">        },</div>
<div class="ln">        {</div>
<div class="ln">          <b class="pr">"@text"</b>: <b class="s">"Technology"</b></div>
<div class="ln">        },</div>
<div class="ln">        {</div>
<div class="ln">          <b class="pr">"@text"</b>: <b class="s">"Science"</b></div>
<div class="ln">        }</div>
<div class="ln">      ]</div>
<div class="ln">    },</div>
<div class="ln">    <b class="pr">"itemDescriptions"</b>: [</div>
<div class="ln">      <b class="s">"&lt;div&gt;Join John Curtis and Paul Kirby as they welcome Professor</b></div>
<div class="ln"><b class="s">Richard Allan from the University of Reading—a leading voice in climate</b></div>
<div class="ln"><b class="s">science and contributor to the Intergovernmental Panel on Climate Change</b></div>
<div class="ln"><b class="s">(IPCC). Together, they explore how climate change data translates into</b></div>
<div class="ln"><b class="s">tangible impacts on our daily lives and the essential role that</b></div>
<div class="ln"><b class="s">decarbonising transport plays in mitigating global heating. Professor</b></div>
<div class="ln"><b class="s">Allan shares insights from his pioneering research, discusses the</b></div>
<div class="ln"><b class="s">importance of effective communication in climate advocacy, and reveals</b></div>
<div class="ln"><b class="s">practical steps everyone can take for a healthier</b></div>
<div class="ln"><b class="s">planet.&lt;br&gt;\n&lt;br&gt;\nRichard Allan&lt;br&gt;\n&lt;br&gt;\n&lt;strong&gt;LinkedIn&lt;/</b></div>
<div class="ln"><b class="s">strong&gt;&lt;br&gt;\n&lt;a hr</b><b class="s">ef=\"https://www.linkedin.com/in/richard-</b></div>
<div class="ln"><b class="s">allan-51b2a114/\"&gt;https://www.linkedin.com/in/richard-allan-51b2a114/</b></div>
<div class="ln"><b class="s">&lt;br&gt;\n&lt;/a&gt;&lt;br&gt;\n&lt;strong&gt;Blue Sky&lt;/strong&gt;&lt;br&gt;\n&lt;a hr</b><b class="s">ef=\"https://</b></div>
<div class="ln"><b class="s">bsky.app/profile/rpallanuk.bsky.social\"&gt;https://bsky.app/profile/</b></div>
<div class="ln"><b class="s">rpallanuk.bsky.social&lt;/a&gt;</b></div></div></div>
<div id="tb">
<div id="title">Graph<em>i</em>QL</div>
<div id="run"><svg width="39" height="39" viewBox="0 0 39 39"><path d="M13.2 11.3L28.6 19.4L13.2 27.5z" fill="#3c4043"/></svg></div>
<div class="btn" style="left:197.4px;width:79.2px">Prettify</div>
<div class="btn" style="left:288.3px;width:77.5px">History</div>
<div class="btn" style="left:377.4px;width:86.1px">Explorer</div>
<div id="docs"><svg width="12" height="20" viewBox="0 0 12 20"><path d="M10 1.5L2 10L10 18.5" fill="none" stroke="#3B5998" stroke-width="1.9"/></svg><span>Docs</span></div>
</div>
</div>
<div id="ledge"></div><div id="bedge"></div><div id="redge"></div><div id="redge2"></div>
<div class="corner" id="cbl"></div><div class="corner" id="cbr"></div>
</body></html>
